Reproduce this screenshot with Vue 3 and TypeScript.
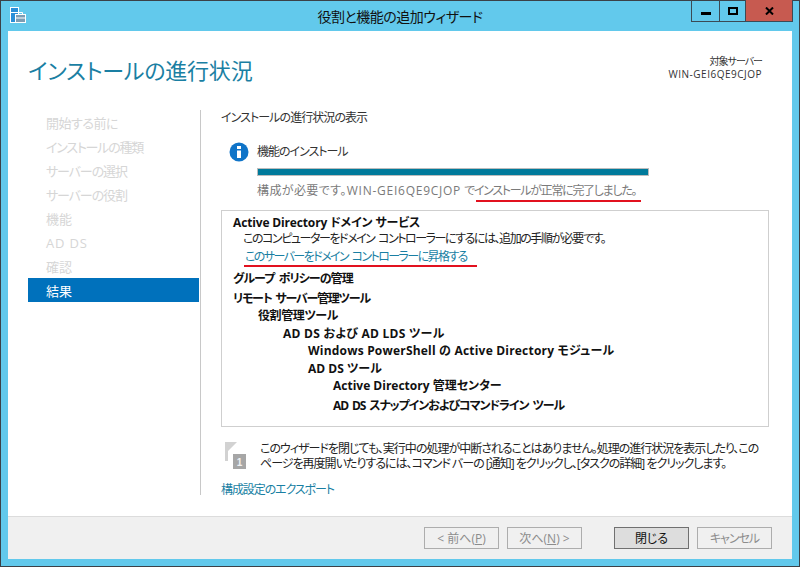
<script setup lang="ts">
type Step = { text: string; tracking: number }
type Row = { text: string; indent: number; height: number; tracking: number; bold?: boolean; link?: boolean }

const steps: Step[] = [
  { text: '開始する前に', tracking: -0.5 },
  { text: 'インストールの種類', tracking: -1.2 },
  { text: 'サーバーの選択', tracking: -1.1 },
  { text: 'サーバーの役割', tracking: -1.1 },
  { text: '機能', tracking: 0 },
  { text: 'AD DS', tracking: 0.8 },
  { text: '確認', tracking: 0 },
  { text: '結果', tracking: 0 },
]

const rows: Row[] = [
  { text: 'Active Directory ドメイン サービス', indent: 0, height: 17, tracking: -0.15, bold: true },
  { text: 'このコンピューターをドメイン コントローラーにするには、追加の手順が必要です。', indent: 10, height: 16, tracking: -1.45 },
  { text: 'このサーバーをドメイン コントローラーに昇格する', indent: 12, height: 20, tracking: -1.58, link: true },
  { text: 'グループ ポリシーの管理', indent: 0, height: 23, tracking: -0.92, bold: true },
  { text: 'リモート サーバー管理ツール', indent: 0, height: 17, tracking: -1.21, bold: true },
  { text: '役割管理ツール', indent: 25, height: 17, tracking: -0.4, bold: true },
  { text: 'AD DS および AD LDS ツール', indent: 50, height: 19, tracking: 0.25, bold: true },
  { text: 'Windows PowerShell の Active Directory モジュール', indent: 75, height: 15, tracking: 0.2, bold: true },
  { text: 'AD DS ツール', indent: 75, height: 21, tracking: 0, bold: true },
  { text: 'Active Directory 管理センター', indent: 100, height: 13, tracking: 0, bold: true },
  { text: 'AD DS スナップインおよびコマンドライン ツール', indent: 100, height: 27, tracking: -1.09, bold: true },
]

// heavily tracked rows lose their word gaps, give them back
const wordGap = (r: Row) => (r.tracking < -0.5 ? '2px' : '0')
</script>

<template>
  <div class="window">
    <div class="titlebar">
      <svg class="app-icon" width="17" height="17" viewBox="0 0 17 17">
        <rect x="0.5" y="0.5" width="8" height="15" fill="#2a8fd8" stroke="#fff" />
        <path d="M0.5 5.5h8" stroke="#fff" />
        <path d="M8.5 7V5.5h4V7" fill="none" stroke="#fff" />
        <rect x="5.5" y="7.5" width="10" height="8" fill="#7d9db4" stroke="#fff" />
        <path d="M5.5 11h10" stroke="#fff" />
      </svg>
      <span class="title">役割と機能の追加ウィザード</span>
      <div class="controls">
        <div class="ctl ctl-min"><i></i></div>
        <div class="ctl ctl-max"><i></i></div>
        <div class="ctl ctl-close">
          <svg width="9" height="8" viewBox="0 0 9 8"><path d="M1 0.5 8 7.5M8 0.5 1 7.5" stroke="#000" stroke-width="2" /></svg>
        </div>
      </div>
    </div>

    <div class="client">
      <header class="head">
        <h1>インストールの進行状況</h1>
        <div class="target">
          <div class="target-label">対象サーバー</div>
          <div class="target-name">WIN-GEI6QE9CJOP</div>
        </div>
      </header>

      <div class="body">
        <nav class="steps">
          <div
            v-for="(s, i) in steps"
            :key="s.text"
            class="step"
            :class="{ active: i === steps.length - 1 }"
            :style="{ letterSpacing: s.tracking + 'px' }"
          >{{ s.text }}</div>
        </nav>

        <main class="content">
          <div class="section-title">インストールの進行状況の表示</div>

          <div class="progress-block">
            <svg class="info" width="20" height="20" viewBox="0 0 20 20">
              <circle cx="10" cy="10" r="9.5" fill="#0f74c8" />
              <rect x="8" y="4" width="4" height="3" fill="#fff" />
              <rect x="8" y="8.5" width="4" height="7.5" fill="#fff" />
            </svg>
            <div class="progress-main">
              <div class="progress-label">機能のインストール</div>
              <div class="bar"><div class="bar-fill"></div></div>
              <div class="status"><span class="status-head">構成が必要です。</span><span class="status-name">WIN-GEI6QE9CJOP</span> <span class="status-tail">でインストールが正常に完了しました。</span></div>
            </div>
          </div>

          <div class="results">
            <div
              v-for="r in rows"
              :key="r.text"
              class="row"
              :class="{ bold: r.bold, link: r.link }"
              :style="{ paddingLeft: r.indent + 'px', height: r.height + 'px', lineHeight: r.height + 'px', letterSpacing: r.tracking + 'px', wordSpacing: wordGap(r) }"
            >{{ r.text }}</div>
          </div>

          <div class="notice">
            <svg class="flag" width="22" height="28" viewBox="0 0 22 28">
              <path d="M0 0H12L3 9V19H0Z" fill="#d2d2d2" />
              <rect x="8" y="12" width="13" height="15" fill="#a6a6a6" />
              <text x="14.5" y="23.5" text-anchor="middle" class="flag-num">1</text>
            </svg>
            <p>このウィザードを閉じても、実行中の処理が中断されることはありません。処理の進行状況を表示したり、この<br />ページを再度開いたりするには、コマンド バーの [通知] をクリックし、[タスクの詳細] をクリックします。</p>
          </div>

          <div class="export">構成設定のエクスポート</div>
        </main>
      </div>

      <footer class="foot">
        <button class="btn" disabled>&lt; 前へ(<u>P</u>)</button>
        <button class="btn" disabled>次へ(<u>N</u>) &gt;</button>
        <button class="btn primary">閉じる</button>
        <button class="btn cancel" disabled>キャンセル</button>
      </footer>
    </div>

    <!-- red annotations drawn over the screenshot -->
    <div class="mark mark-status"></div>
    <div class="mark mark-link"></div>
  </div>
</template>

<style>
html, body {
  margin: 0;
  background: #62c9ec;
}
</style>

<style scoped>
.window {
  position: relative;
  box-sizing: border-box;
  width: 800px;
  height: 567px;
  display: flex;
  flex-direction: column;
  padding: 0 8px 7px;
  background: #62c9ec;
  border: 1px solid #3b4148;
  font-family: "Open Sans", "Noto Sans CJK JP", sans-serif;
  font-feature-settings: "palt";
  font-size: 12px;
  color: #1a1a1a;
}

.titlebar {
  position: relative;
  height: 30px;
  margin: 0 -7px;
  display: flex;
  align-items: center;
  justify-content: center;
  flex-shrink: 0;
}

.app-icon {
  position: absolute;
  left: 8px;
  top: 6px;
}

.title {
  font-size: 14px;
  letter-spacing: -0.5px;
  color: #111;
  margin-bottom: 1px;
}

.controls {
  position: absolute;
  right: 5px;
  top: -1px;
  height: 22px;
  display: flex;
  box-sizing: border-box;
  border: 1px solid #3b4a55;
  border-top: 0;
}

.ctl {
  display: flex;
  align-items: center;
  justify-content: center;
  box-sizing: border-box;
  border-right: 1px solid #3b4a55;
}

.ctl:last-child {
  border-right: 0;
}

.ctl-min { width: 28px; }
.ctl-max { width: 26px; }
.ctl-close { width: 46px; background: #c75a50; }

.ctl-min i {
  display: block;
  width: 10px;
  height: 3px;
  margin-top: 6px;
  background: #000;
}

.ctl-max i {
  display: block;
  box-sizing: border-box;
  width: 10px;
  height: 8px;
  border: 2px solid #000;
}

.client {
  flex: 1;
  display: flex;
  flex-direction: column;
  margin-left: -1px;
  margin-right: -1px;
  background: #fff;
  min-height: 0;
}

.head {
  height: 79px;
  box-sizing: border-box;
  display: flex;
  justify-content: space-between;
  padding: 22px 30px 0 20px;
  flex-shrink: 0;
}

.head h1 {
  margin: 0;
  font-size: 22px;
  font-weight: 400;
  line-height: 34px;
  letter-spacing: -0.2px;
  color: #1a7fa3;
}

.target {
  text-align: right;
  font-size: 10px;
  line-height: 13px;
  color: #333;
  margin-top: 2px;
}

.target-label {
  letter-spacing: -1px;
}

.target-name {
  letter-spacing: 0.5px;
}

.body {
  flex: 1;
  display: flex;
  padding-left: 20px;
  min-height: 0;
}

.steps {
  width: 171px;
  flex-shrink: 0;
}

.step {
  height: 24px;
  line-height: 26px;
  padding-left: 18px;
  font-size: 13px;
  color: #d6d6d6;
}

.step.active {
  background: #0071bc;
  color: #fff;
}

.content {
  flex: 1;
  min-width: 0;
  margin-left: 1px;
  height: 385px;
  border-left: 1px solid #c8c8c8;
  padding-left: 20px;
  margin-right: 23px;
  display: flex;
  flex-direction: column;
}

.section-title {
  height: 14px;
  line-height: 16px;
  letter-spacing: -0.93px;
  color: #333;
}

.progress-block {
  display: flex;
  margin-top: 18px;
  padding-left: 8px;
}

.info {
  flex-shrink: 0;
}

.progress-main {
  margin-left: 8px;
  width: 392px;
}

.progress-label {
  height: 18px;
  line-height: 20px;
  letter-spacing: -1px;
  color: #333;
}

.bar {
  margin-top: 8px;
  height: 8px;
  border: 1px solid #bcbcbc;
  box-sizing: border-box;
  background: #007a9b;
}

.bar-fill {
  height: 100%;
  background: #007a9b;
}

.status {
  margin-top: 6px;
  height: 16px;
  line-height: 18px;
  color: #7a7a7a;
  white-space: nowrap;
}

.status-head {
  letter-spacing: 0.4px;
}

.status-name {
  letter-spacing: 0.75px;
}

.status-tail {
  letter-spacing: -1.3px;
}

.results {
  margin-top: 12px;
  height: 217px;
  box-sizing: border-box;
  border: 1px solid #cfcfcf;
  padding: 3px 11px 0;
  flex-shrink: 0;
}

.row {
  white-space: nowrap;
  color: #222;
}

.row.bold {
  font-weight: 700;
  color: #111;
}

.row.link {
  color: #1a7fa3;
}

.notice {
  display: flex;
  margin-top: 14px;
  padding-left: 4px;
}

.flag {
  flex-shrink: 0;
  margin-top: 1px;
}

.flag-num {
  font-family: "Liberation Sans", sans-serif;
  font-size: 10px;
  font-weight: 700;
  fill: #f0f0f0;
}

.notice p {
  margin: 0 0 0 13px;
  line-height: 15px;
  white-space: nowrap;
  letter-spacing: -1px;
  color: #222;
}

.export {
  margin-top: 11px;
  color: #1a7fa3;
  line-height: 16px;
  letter-spacing: -1.1px;
}

.foot {
  height: 43px;
  flex-shrink: 0;
  box-sizing: border-box;
  border-top: 1px solid #dcdcdc;
  background: #f0f0f0;
  display: flex;
  align-items: flex-start;
  justify-content: flex-end;
  padding: 10px 20px 0 0;
  gap: 8px;
}

.btn {
  width: 75px;
  height: 22px;
  box-sizing: border-box;
  border: 1px solid #adadad;
  background: #f0f0f0;
  font: inherit;
  font-feature-settings: "palt";
  color: #8c8c8c;
  padding: 0;
}

.btn.primary {
  margin-left: 24px;
  border-color: #707070;
  background: #dddddd;
  color: #111;
}

.btn.cancel {
  letter-spacing: -1px;
}

.mark {
  position: absolute;
  height: 2px;
  background: #e2111f;
}

.mark-status {
  left: 475px;
  top: 199px;
  width: 165px;
}

.mark-link {
  left: 243px;
  top: 264px;
  width: 233px;
}
</style>
